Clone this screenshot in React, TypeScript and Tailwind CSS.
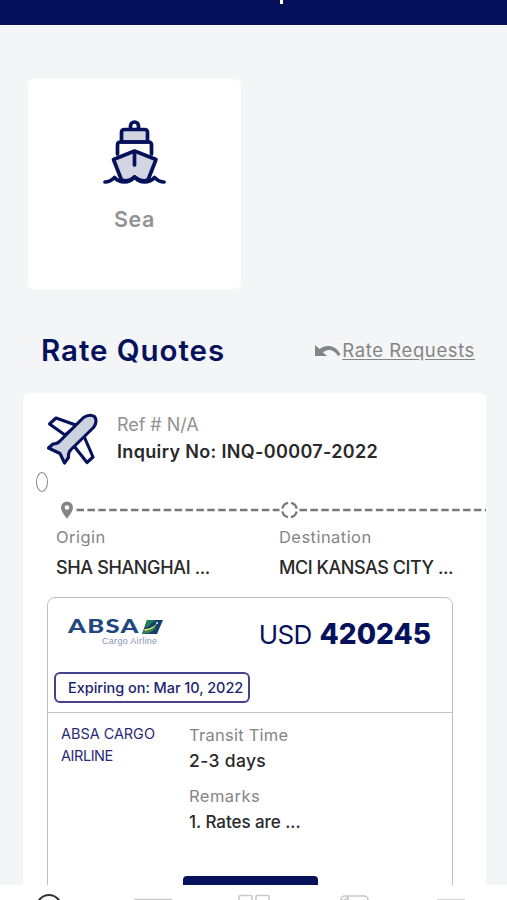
const route = [
    { label: 'Origin', value: 'SHA SHANGHAI ...', valueClass: 'tracking-[-0.360px]' },
    { label: 'Destination', value: 'MCI KANSAS CITY ...', valueClass: 'tracking-[-0.450px]' },
]

function ShipIcon() {
    return (
        <svg width="64" height="66" viewBox="0 0 64 66" fill="none" stroke="#06115b" strokeWidth="3.7" strokeLinecap="round" strokeLinejoin="round">
            <path d="M27.500 9V6a4 4 0 0 1 8 0v3" />
            <path d="M18.500 22v-9.500q0-3 3-3h20q3 0 3 3V22z" fill="#d3d5e3" />
            <path d="M14.500 34V25q0-3 3-3h28q3 0 3 3v9" />
            <path d="M18.500 60 10.500 39.500 31.500 31l21.500 8.500L45 60q-7 2.500-13.500-3-5.500 5.500-13 3z" fill="#d3d5e3" />
            <path d="M31.500 32v13" />
            <path d="M2 62q5 0 9.500-4.500 4 4.500 10 4.500 5.500 0 10-5 4.500 5 10 5 6 0 10-4.500 4.500 4.500 9.500 4.500" />
        </svg>
    )
}

function PlaneIcon() {
    return (
        <svg width="52" height="52" viewBox="0 0 52 52" fill="none" stroke="#06115b" strokeWidth="3.1" strokeLinejoin="round">
            <path d="M30 12.500 9 5 2.500 11 18 22zM36 21l10 23-6 5.500L27 33z" fill="#fff" />
            <path d="M13 28 36.500 4.500q6-4 11-1 3.500 5-1 11L24 36.500q-3 3-2.500 8L17.500 50l-4.500-9.500L1.500 35 6 31q4.500 0 7-3z" fill="#ccd2df" />
        </svg>
    )
}

function AbsaLogo() {
    return (
        <div className="w-[96px]">
            <div className="flex h-[17px] items-center">
                <span className="inline-block w-[73px] origin-left scale-x-[1.420] font-['Lato'] text-[18px] font-black leading-[17px] tracking-[0.900px] text-[#21477f]">ABSA</span>
                <svg width="21" height="16" viewBox="0 0 21 16" className="ml-[1px] shrink-0">
                    <path d="M5 1h16l-6 14H0z" fill="#123f70" />
                    <path d="M5 1h9C8 4 8 8 3 9z" fill="#1c8054" />
                    <path d="M2 10c5 0 10-2 13-6-2 5-6 7-12 8z" fill="#eee75c" />
                    <path d="M1 12c6 0 11-2 14-6-2 5-7 9-15 9z" fill="#36864e" />
                    <circle cx="15" cy="4" r="1" fill="#fff" />
                </svg>
            </div>
            <p className="ml-[34px] mt-px whitespace-nowrap font-['Liberation_Sans'] text-[9px] leading-[10px] tracking-[0.300px] text-[#8793b8]">Cargo Airline</p>
        </div>
    )
}

function RouteLine() {
    return (
        <svg width="427" height="20" viewBox="0 0 427 20" fill="none" stroke="#777" className="block">
            <path d="M8 1.500a6 6 0 0 0-6 6C2 12 8 18.500 8 18.500S14 12 14 7.500a6 6 0 0 0-6-6z" fill="#858585" stroke="none" />
            <circle cx="8" cy="7.500" r="2.300" fill="#fff" stroke="none" />
            <path d="M17.500 10h203" strokeWidth="2.400" strokeDasharray="7.500 3.400" />
            <circle cx="230.500" cy="10" r="7.300" strokeWidth="2.200" strokeDasharray="8.400 3.060" strokeDashoffset="-1.500" />
            <path d="M240.500 10h187" strokeWidth="2.400" strokeDasharray="7.500 3.400" />
        </svg>
    )
}

function QuoteCard() {
    return (
        <div className="ml-[24px] mt-[15px] h-[320px] w-[406px] rounded-[8px] border border-[#bfc0c9]">
            <div className="h-[115px] border-b border-[#c5c5c9]">
                <div className="flex h-[74px] items-start justify-between pl-[20px] pr-[21px] pt-[20px]">
                    <AbsaLogo />
                    <p className="-mt-px flex items-baseline gap-[8px] whitespace-nowrap leading-[34px] text-[#06115b]">
                        <span className="text-[26px] tracking-[-0.700px]">USD</span>
                        <span className="text-[28px] font-extrabold">420245</span>
                    </p>
                </div>
                <div className="ml-[6px] flex h-[31px] w-[196px] items-center whitespace-nowrap rounded-[6px] border-2 border-[#45448a] pl-[12px] text-[14.500px] font-medium tracking-[-0.050px] text-[#211f6d]">
                    Expiring on: Mar 10, 2022
                </div>
            </div>
            <div className="flex pl-[13px] pt-[10px]">
                <p className="w-[128px] text-[14.500px] leading-[22px] tracking-[-0.050px] text-[#292a76]">
                    ABSA CARGO
                    <br />
                    <span className="tracking-[-0.450px]">AIRLINE</span>
                </p>
                <div className="whitespace-nowrap leading-[25px]">
                    <p className="text-[16.500px] tracking-[0.250px] text-[#858585]">Transit Time</p>
                    <p className="text-[17.500px] font-medium tracking-[0.350px] text-[#292929]">2-3 days</p>
                    <p className="mt-[11px] text-[16.500px] tracking-[0.450px] text-[#858585]">Remarks</p>
                    <p className="mt-px text-[17px] font-medium tracking-[-0.050px] text-[#292929]">1. Rates are ...</p>
                </div>
            </div>
            <div className="ml-[135px] mt-[41px] h-[36px] w-[135px] rounded-[4px] bg-[#06115b]" />
        </div>
    )
}

function BottomNav() {
    return (
        <footer className="h-[15px] shrink-0 overflow-hidden bg-white">
            <svg width="507" height="15" viewBox="0 0 507 15" fill="none" stroke="#c9c9c9" strokeWidth="1.600">
                <circle cx="49" cy="22" r="12" stroke="#333" strokeWidth="2" />
                <path d="M134 14.500h38M437 15h28" />
                <rect x="239" y="10.500" width="13" height="12" rx="1" />
                <rect x="256" y="10.500" width="13" height="12" rx="1" />
                <rect x="341" y="11" width="27" height="20" rx="4" />
                <path d="M342 15q5 0 5.500-3.500M348 11v4" />
            </svg>
        </footer>
    )
}

export default function App() {
    return (
        <div className="flex h-[900px] w-[507px] flex-col overflow-hidden bg-[#f3f5f7] font-['Inter',sans-serif]">
            <header className="flex h-[25px] shrink-0 justify-center bg-[#06115b] pl-[56px]">
                <span className="h-[4px] w-[3px] bg-white" />
            </header>

            <main className="min-h-0 flex-1 overflow-hidden border-t border-white">
                <div className="ml-[28px] mt-[53px] flex h-[210px] w-[213px] flex-col items-center rounded-[6px] bg-white pt-[41px]">
                    <ShipIcon />
                    <p className="mt-[19px] text-[21.500px] font-semibold leading-[28px] tracking-[0.500px] text-[#929292]">Sea</p>
                </div>

                <div className="mt-[43px] flex h-[38px] items-center justify-between pl-[41px] pr-[32px]">
                    <h1 className="-mt-[2px] whitespace-nowrap text-[29.500px] font-semibold tracking-[0.950px] text-[#06115b]">Rate Quotes</h1>
                    <a className="flex items-center whitespace-nowrap text-[18.500px] text-[#858585]">
                        <svg width="28" height="16" viewBox="0 0 28 16">
                            <path d="M1 2v11h12L9 9.500C13 5.500 20 6 24 13l2.500-1.500C22 2 12 1 5.500 6z" fill="#858585" />
                        </svg>
                        <span className="tracking-[0.600px] underline underline-offset-2">Rate Requests</span>
                    </a>
                </div>

                <section className="ml-[23px] mt-[23px] h-[600px] w-[463px] overflow-hidden rounded-t-[6px] bg-white pt-[20px]">
                    <div className="flex h-[51px] items-center pl-[24px]">
                        <PlaneIcon />
                        <div className="-mt-[2px] ml-[18px] whitespace-nowrap leading-[27px]">
                            <p className="text-[18px] tracking-[-0.050px] text-[#929292]">Ref # N/A</p>
                            <p className="text-[18px] font-semibold tracking-[0.340px] text-[#292929]">Inquiry No: INQ-00007-2022</p>
                        </div>
                    </div>

                    <div className="ml-[13px] mt-[8px] h-[20px] w-[12px] rounded-[50%] border border-[#888]" />

                    <div className="ml-[36px] mt-[8px]">
                        <RouteLine />
                    </div>

                    <div className="mt-[5px] grid grid-cols-[223px_1fr] pl-[33px]">
                        {route.map((stop) => (
                            <div key={stop.label} className="whitespace-nowrap">
                                <p className="text-[16.500px] leading-[24px] tracking-[0.450px] text-[#858585]">{stop.label}</p>
                                <p className={`mt-[5px] text-[18px] font-medium leading-[28px] text-[#292929] ${stop.valueClass}`}>{stop.value}</p>
                            </div>
                        ))}
                    </div>

                    <QuoteCard />
                </section>
            </main>

            <BottomNav />
        </div>
    )
}
